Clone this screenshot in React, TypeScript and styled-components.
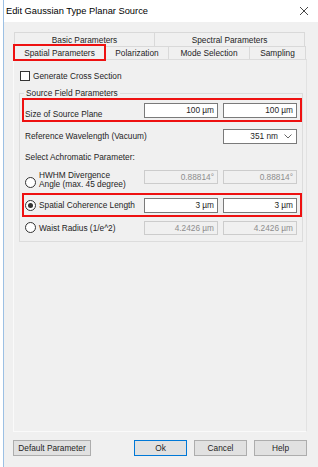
import React from 'react'
import styled, { createGlobalStyle } from 'styled-components'

const GlobalStyle = createGlobalStyle`
  html, body {
    margin: 0;
    padding: 0;
    background: #ffffff;
  }
  body {
    font-family: "Liberation Sans", Arial, sans-serif;
    font-size: 8.3px;
    color: #1e1e1e;
  }
  * {
    box-sizing: border-box;
  }
`

const HL = '#ee1111'

const Window = styled.div`
  margin-left: 3px;
  height: 467px;
  border-left: 1px solid #9cc0e4;
  background: #f0f0f0;
  display: flex;
  flex-direction: column;
  overflow: hidden;
`

const TitleBar = styled.div`
  height: 22px;
  background: #ffffff;
  display: flex;
  align-items: center;
  justify-content: space-between;
  padding: 0 9px 0 2px;
  font-size: 9.3px;
  color: #000;
`

const Body = styled.div`
  flex: 1;
  padding: 10px 11px 0 9px;
`

const TabRow = styled.div<{ $h: number }>`
  display: flex;
  align-items: flex-start;
  height: ${p => p.$h}px;
  margin-left: 1px;
`

const Tab = styled.div<{ $w: number; $h: number; $selected?: boolean }>`
  width: ${p => p.$w}px;
  height: ${p => p.$h}px;
  display: flex;
  align-items: center;
  justify-content: center;
  background: #f0f0f0;
  border: 1px solid #d9d9d9;
  border-bottom: none;
  white-space: nowrap;
  & + & {
    margin-left: -1px;
  }
  ${p =>
    p.$selected &&
    `
    position: relative;
    z-index: 1;
    margin-top: -2px;
    margin-left: -1px;
    border: 2px solid ${HL};
  `}
`

const Panel = styled.div`
  height: 373px;
  border: 1px solid #fafafa;
  border-top-color: #dcdcdc;
  border-right-color: #e2e2e2;
  padding: 10px 3px 0 6px;
`

const CheckRow = styled.label`
  display: flex;
  align-items: center;
  gap: 3px;
  height: 12px;
`

const CheckBox = styled.span`
  width: 10px;
  height: 10px;
  border: 1px solid #333;
  background: #fff;
`

const Group = styled.fieldset`
  margin: 6px 0 0 -1px;
  padding: 0 0 3px 2px;
  border: 1px solid #dcdcdc;
  min-inline-size: 0;
`

const Legend = styled.legend`
  padding: 0 2px;
  margin-left: 2px;
  line-height: 10px;
  font-size: 8.3px;
`

const Row = styled.div<{ $h: number; $hl?: boolean; $top?: number; $align?: string }>`
  width: 280px;
  height: ${p => p.$h}px;
  margin-top: ${p => p.$top ?? 0}px;
  border: 2px solid ${p => (p.$hl ? HL : 'transparent')};
  padding: 0 3px 0 1px;
  display: flex;
  align-items: ${p => p.$align ?? 'center'};
  gap: 5px;
`

const Label = styled.div<{ $low?: boolean }>`
  flex: 1;
  line-height: 10px;
  padding-top: ${p => (p.$low ? 8 : 0)}px;
`

const RadioLabel = styled.div`
  flex: 1;
  display: flex;
  align-items: center;
  gap: 3px;
  align-self: center;
`

const Radio = styled.span<{ $checked?: boolean; $shift?: number }>`
  width: 11px;
  height: 11px;
  flex: none;
  border-radius: 50%;
  border: 1px solid #333;
  background: #fff;
  margin-top: ${p => p.$shift ?? 0}px;
  display: flex;
  align-items: center;
  justify-content: center;
  &::after {
    content: '';
    width: 5px;
    height: 5px;
    border-radius: 50%;
    background: ${p => (p.$checked ? '#333' : 'transparent')};
  }
`

const TwoLine = styled.div`
  line-height: 9px;
`

const Field = styled.div<{ $disabled?: boolean; $h?: number }>`
  width: 74px;
  height: ${p => p.$h ?? 15}px;
  flex: none;
  display: flex;
  align-items: center;
  justify-content: flex-end;
  padding-right: 3px;
  background: ${p => (p.$disabled ? '#f0f0f0' : '#fff')};
  border: 1px solid ${p => (p.$disabled ? '#cccccc' : '#7a7a7a')};
  color: ${p => (p.$disabled ? '#8d8d8d' : '#1e1e1e')};
  white-space: nowrap;
`

const Select = styled.div`
  width: 74px;
  height: 15px;
  flex: none;
  display: flex;
  align-items: center;
  justify-content: flex-end;
  gap: 6px;
  padding-right: 4px;
  background: #fff;
  border: 1px solid #7a7a7a;
`

const ButtonRow = styled.div`
  display: flex;
  gap: 7px;
  margin-top: 8px;
`

const Button = styled.div<{ $w: number; $primary?: boolean; $push?: boolean }>`
  width: ${p => p.$w}px;
  height: 16px;
  display: flex;
  align-items: center;
  justify-content: center;
  background: #e1e1e1;
  border: 1px solid ${p => (p.$primary ? '#0078d7' : '#adadad')};
  margin-left: ${p => (p.$push ? 'auto' : '0')};
  white-space: nowrap;
`

const CloseIcon = () => (
  <svg width="10" height="10" viewBox="0 0 10 10">
    <path d="M1 1 L9 9 M9 1 L1 9" stroke="#333" strokeWidth="0.9" fill="none" />
  </svg>
)

const Chevron = () => (
  <svg width="8" height="5" viewBox="0 0 8 5">
    <path d="M0.5 0.5 L4 4 L7.5 0.5" stroke="#555" strokeWidth="0.9" fill="none" />
  </svg>
)

export default function App() {
  return (
    <>
      <GlobalStyle />
      <Window>
        <TitleBar>
          <span>Edit Gaussian Type Planar Source</span>
          <CloseIcon />
        </TitleBar>
        <Body>
          <TabRow $h={14}>
            <Tab $w={141} $h={14}>Basic Parameters</Tab>
            <Tab $w={151} $h={14}>Spectral Parameters</Tab>
          </TabRow>
          <TabRow $h={13}>
            <Tab $w={93} $h={17} $selected>Spatial Parameters</Tab>
            <Tab $w={64} $h={13}>Polarization</Tab>
            <Tab $w={82} $h={13}>Mode Selection</Tab>
            <Tab $w={57} $h={13}>Sampling</Tab>
          </TabRow>
          <Panel>
            <CheckRow>
              <CheckBox />
              <span>Generate Cross Section</span>
            </CheckRow>
            <Group>
              <Legend>Source Field Parameters</Legend>
              <Row $h={24} $hl>
                <Label $low>Size of Source Plane</Label>
                <Field>100 µm</Field>
                <Field>100 µm</Field>
              </Row>
              <Row $h={24} $top={2}>
                <Label>Reference Wavelength (Vacuum)</Label>
                <Select>
                  <span>351 nm</span>
                  <Chevron />
                </Select>
              </Row>
              <Row $h={18}>
                <Label>Select Achromatic Parameter:</Label>
              </Row>
              <Row $h={24} $top={2} $align="flex-start">
                <RadioLabel>
                  <Radio $shift={4} />
                  <TwoLine>
                    HWHM Divergence
                    <br />
                    Angle (max. 45 degree)
                  </TwoLine>
                </RadioLabel>
                <Field $disabled $h={14}>0.88814°</Field>
                <Field $disabled $h={14}>0.88814°</Field>
              </Row>
              <Row $h={24} $hl $top={1}>
                <RadioLabel>
                  <Radio $checked />
                  <span>Spatial Coherence Length</span>
                </RadioLabel>
                <Field>3 µm</Field>
                <Field>3 µm</Field>
              </Row>
              <Row $h={21}>
                <RadioLabel>
                  <Radio />
                  <span>Waist Radius (1/e^2)</span>
                </RadioLabel>
                <Field $disabled $h={14}>4.2426 µm</Field>
                <Field $disabled $h={14}>4.2426 µm</Field>
              </Row>
            </Group>
          </Panel>
          <ButtonRow>
            <Button $w={78}>Default Parameter</Button>
            <Button $w={53} $primary $push>Ok</Button>
            <Button $w={53}>Cancel</Button>
            <Button $w={53}>Help</Button>
          </ButtonRow>
        </Body>
      </Window>
    </>
  )
}
